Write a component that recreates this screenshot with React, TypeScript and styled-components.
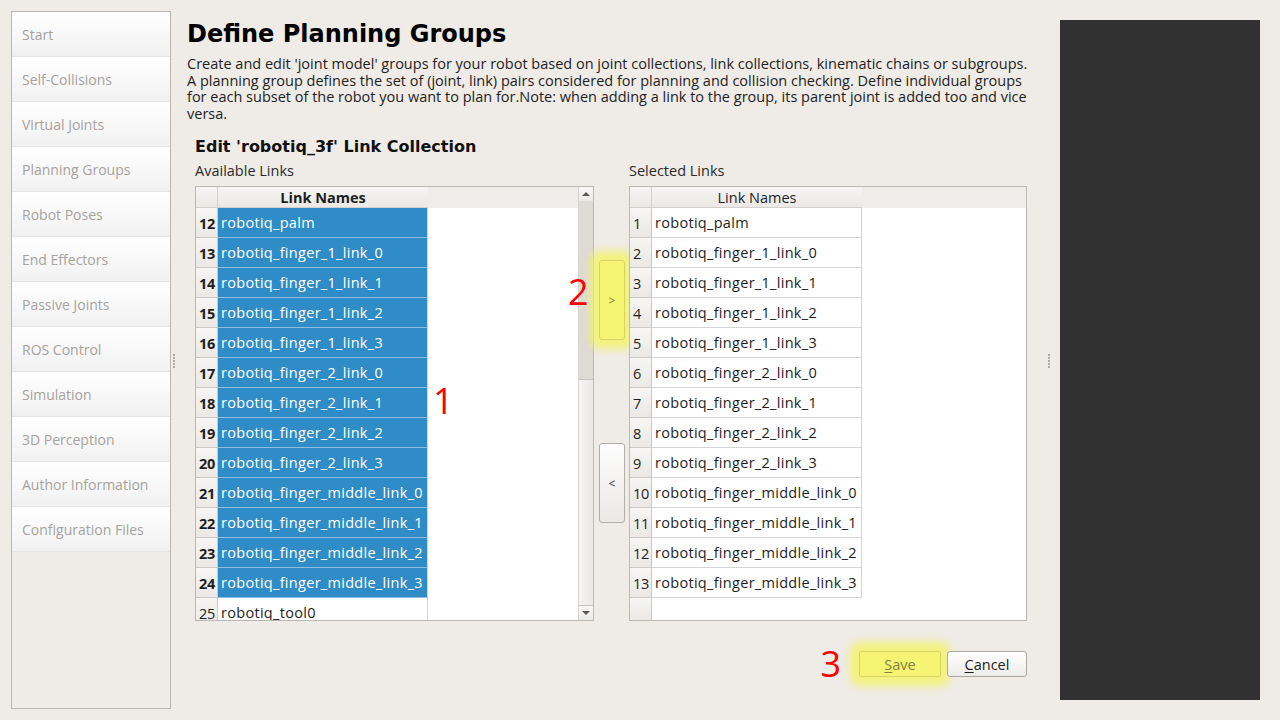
import React from 'react'
import styled, { createGlobalStyle, css } from 'styled-components'

const UI_FONT = `"Open Sans", "Noto Sans", sans-serif`
const TITLE_FONT = `"DejaVu Sans", "Liberation Sans", sans-serif`
const TEXT_SIZE = '14.5px'

const GlobalStyle = createGlobalStyle`
  html, body {
    margin: 0;
    padding: 0;
  }
  body {
    background: #efebe7;
    font-family: ${UI_FONT};
    color: #2b2b2b;
    overflow: hidden;
  }
  * {
    box-sizing: border-box;
  }
`

const steps = [
  'Start',
  'Self-Collisions',
  'Virtual Joints',
  'Planning Groups',
  'Robot Poses',
  'End Effectors',
  'Passive Joints',
  'ROS Control',
  'Simulation',
  '3D Perception',
  'Author Information',
  'Configuration Files',
]

const linkNames = [
  'robotiq_palm',
  'robotiq_finger_1_link_0',
  'robotiq_finger_1_link_1',
  'robotiq_finger_1_link_2',
  'robotiq_finger_1_link_3',
  'robotiq_finger_2_link_0',
  'robotiq_finger_2_link_1',
  'robotiq_finger_2_link_2',
  'robotiq_finger_2_link_3',
  'robotiq_finger_middle_link_0',
  'robotiq_finger_middle_link_1',
  'robotiq_finger_middle_link_2',
  'robotiq_finger_middle_link_3',
]

const available = [...linkNames, 'robotiq_tool0']

const descriptionLines = [
  "Create and edit 'joint model' groups for your robot based on joint collections, link collections, kinematic chains or subgroups.",
  'A planning group defines the set of (joint, link) pairs considered for planning and collision checking. Define individual groups',
  'for each subset of the robot you want to plan for.Note: when adding a link to the group, its parent joint is added too and vice',
  'versa.',
]

export default function App() {
  return (
    <>
      <GlobalStyle />
      <Screen>
        <Nav>
          {steps.map((s) => (
            <NavItem key={s}>{s}</NavItem>
          ))}
        </Nav>
        <Splitter $offset={2}>
          <Grip>
            {[0, 1, 2, 3, 4].map((i) => (
              <Dot key={i} />
            ))}
          </Grip>
        </Splitter>

        <Content>
          <Title>Define Planning Groups</Title>
          <Description>
            {descriptionLines.map((l) => (
              <Line key={l}>{l}</Line>
            ))}
          </Description>

          <Group>
            <GroupTitle>Edit 'robotiq_3f' Link Collection</GroupTitle>
            <Columns>
              <ListColumn>
                <ListLabel>Available Links</ListLabel>
                <TableFrame $width={399}>
                  <TableMain>
                    <HeaderRow>
                      <Corner />
                      <ColumnHeader $bold>Link Names</ColumnHeader>
                    </HeaderRow>
                    <TableBody>
                      {available.map((name, i) => {
                        const selected = i < 13
                        return (
                          <Row key={name}>
                            <NumCell $bold={selected}>{i + 12}</NumCell>
                            <NameCell $selected={selected}>{name}</NameCell>
                          </Row>
                        )
                      })}
                    </TableBody>
                  </TableMain>
                  <ScrollBar>
                    <ScrollArrow>
                      <TriangleUp />
                    </ScrollArrow>
                    <ScrollTrack>
                      <ScrollHandle />
                    </ScrollTrack>
                    <ScrollArrow>
                      <TriangleDown />
                    </ScrollArrow>
                  </ScrollBar>
                  <Annotation style={{ left: 237, top: 196 }}>1</Annotation>
                </TableFrame>
              </ListColumn>

              <MoveColumn>
                <MoveButton $highlight>&gt;</MoveButton>
                <MoveButton>&lt;</MoveButton>
                <Annotation style={{ left: -26, top: 112 }}>2</Annotation>
              </MoveColumn>

              <ListColumn>
                <ListLabel>Selected Links</ListLabel>
                <TableFrame $width={398}>
                  <TableMain>
                    <HeaderRow>
                      <Corner />
                      <ColumnHeader>Link Names</ColumnHeader>
                    </HeaderRow>
                    <TableBody>
                      {linkNames.map((name, i) => (
                        <Row key={name}>
                          <NumCell>{i + 1}</NumCell>
                          <NameCell>{name}</NameCell>
                        </Row>
                      ))}
                      <FillerRow>
                        <FillerNum />
                      </FillerRow>
                    </TableBody>
                  </TableMain>
                </TableFrame>
              </ListColumn>
            </Columns>

            <ActionRow>
              <StepMark>3</StepMark>
              <DialogButton $highlight $width={82}>
                <u>S</u>ave
              </DialogButton>
              <DialogButton $width={80}>
                <u>C</u>ancel
              </DialogButton>
            </ActionRow>
          </Group>
        </Content>

        <Splitter $offset={11}>
          <Grip>
            {[0, 1, 2, 3, 4].map((i) => (
              <Dot key={i} />
            ))}
          </Grip>
        </Splitter>
        <Preview />
      </Screen>
    </>
  )
}

const Screen = styled.div`
  width: 1280px;
  height: 720px;
  display: flex;
  background: #efebe7;
`

const Nav = styled.nav`
  flex: none;
  width: 160px;
  margin: 11px 0 11px 11px;
  border: 1px solid #bab6b2;
  display: flex;
  flex-direction: column;
`

const NavItem = styled.div`
  flex: none;
  height: 45px;
  padding-left: 10px;
  display: flex;
  align-items: center;
  background: linear-gradient(#ffffff, #f1f1f1);
  border-bottom: 1px solid #e7e5e3;
  color: #a6a29e;
  font-size: 14px;
`

const Splitter = styled.div<{ $offset: number }>`
  flex: none;
  width: ${(p) => (p.$offset > 5 ? 23 : 16)}px;
  padding-left: ${(p) => p.$offset}px;
  display: flex;
  align-items: center;
`

const Grip = styled.div`
  display: flex;
  flex-direction: column;
  gap: 1px;
  margin-top: 1px;
`

const Dot = styled.span`
  width: 2px;
  height: 2px;
  background: #aeaaa6;
`

const Content = styled.main`
  flex: 1;
  min-width: 0;
  padding-top: 20px;
  display: flex;
  flex-direction: column;
`

const Title = styled.h1`
  margin: 0;
  font-family: ${TITLE_FONT};
  font-weight: bold;
  font-size: 24px;
  line-height: 28px;
  color: #000;
`

const Description = styled.div`
  margin-top: 8px;
  font-size: ${TEXT_SIZE};
  line-height: 16.6px;
  color: #1e1e1e;
`

const Line = styled.div`
  white-space: nowrap;
`

const Group = styled.section`
  margin-left: 8px;
  margin-top: 15px;
  width: 832px;
  display: flex;
  flex-direction: column;
`

const GroupTitle = styled.h2`
  margin: 0;
  font-family: ${TITLE_FONT};
  font-weight: bold;
  font-size: 16px;
  line-height: 20px;
  color: #111;
`

const Columns = styled.div`
  display: flex;
  margin-top: 5px;
`

const ListColumn = styled.div`
  display: flex;
  flex-direction: column;
`

const ListLabel = styled.div`
  font-size: ${TEXT_SIZE};
  line-height: 18px;
  color: #2b2b2b;
  margin-bottom: 6px;
`

const TableFrame = styled.div<{ $width: number }>`
  position: relative;
  width: ${(p) => p.$width}px;
  height: 435px;
  border: 1px solid #bcb8b4;
  background: #ffffff;
  display: flex;
  overflow: hidden;
`

const TableMain = styled.div`
  flex: 1;
  display: flex;
  flex-direction: column;
  min-width: 0;
`

const HeaderRow = styled.div`
  flex: none;
  height: 21px;
  display: flex;
  background: #efedea;
`

const headerFace = css`
  background: linear-gradient(#f6f5f3, #ebe8e5);
  border-bottom: 1px solid #d3cfcb;
`

const Corner = styled.div`
  ${headerFace};
  width: 22px;
  border-right: 1px solid #d3cfcb;
`

const ColumnHeader = styled.div<{ $bold?: boolean }>`
  ${headerFace};
  width: 210px;
  display: flex;
  align-items: center;
  justify-content: center;
  font-size: ${TEXT_SIZE};
  font-weight: ${(p) => (p.$bold ? 700 : 400)};
  color: #1e1e1e;
`

const TableBody = styled.div`
  flex: 1;
  display: flex;
  flex-direction: column;
  overflow: hidden;
`

const Row = styled.div`
  flex: none;
  height: 30px;
  display: flex;
`

const NumCell = styled.div<{ $bold?: boolean }>`
  width: 22px;
  padding: 2px 0 0 3px;
  display: flex;
  align-items: center;
  background: linear-gradient(#f7f6f4, #ebe8e5);
  border-right: 1px solid #cbc7c3;
  border-bottom: 1px solid #cbc7c3;
  font-size: ${TEXT_SIZE};
  font-weight: ${(p) => (p.$bold ? 700 : 400)};
  color: #1e1e1e;
  letter-spacing: -0.4px;
  white-space: nowrap;
`

const NameCell = styled.div<{ $selected?: boolean }>`
  width: 210px;
  padding-left: 3px;
  display: flex;
  align-items: center;
  border-right: 1px solid #d4d4d4;
  border-bottom: 1px solid ${(p) => (p.$selected ? '#8fbde0' : '#d4d4d4')};
  background: ${(p) => (p.$selected ? '#308cc6' : '#ffffff')};
  color: ${(p) => (p.$selected ? '#ffffff' : '#1e1e1e')};
  font-size: ${TEXT_SIZE};
  letter-spacing: 0.3px;
  white-space: nowrap;
`

const FillerRow = styled.div`
  flex: 1;
  display: flex;
`

const FillerNum = styled.div`
  width: 22px;
  background: linear-gradient(#f7f6f4, #ebe8e5);
  border-right: 1px solid #cbc7c3;
`

const ScrollBar = styled.div`
  flex: none;
  width: 15px;
  display: flex;
  flex-direction: column;
  background: #efedea;
  border-left: 1px solid #d8d4d0;
`

const ScrollArrow = styled.div`
  flex: none;
  height: 14px;
  display: flex;
  align-items: center;
  justify-content: center;
  background: linear-gradient(#f9f8f7, #eceae7);
`

const TriangleUp = styled.span`
  width: 0;
  height: 0;
  border-left: 4px solid transparent;
  border-right: 4px solid transparent;
  border-bottom: 4px solid #5a5856;
`

const TriangleDown = styled.span`
  width: 0;
  height: 0;
  border-left: 4px solid transparent;
  border-right: 4px solid transparent;
  border-top: 4px solid #5a5856;
`

const ScrollTrack = styled.div`
  flex: 1;
  display: flex;
  flex-direction: column;
  justify-content: flex-end;
  background: #dedad6;
`

const ScrollHandle = styled.div`
  height: 227px;
  background: linear-gradient(90deg, #f6f5f3, #ebe8e5);
  border-top: 1px solid #c6c2be;
  border-bottom: 1px solid #c6c2be;
`

const MoveColumn = styled.div`
  position: relative;
  width: 37px;
  padding: 98px 0 0 5px;
  display: flex;
  flex-direction: column;
  gap: 103px;
`

const highlightFace = css`
  background: #f5f573;
  border-color: #d3d36a;
  color: #84823c;
  box-shadow: 0 0 9px 9px rgba(244, 244, 96, 0.8);
`

const MoveButton = styled.button<{ $highlight?: boolean }>`
  width: 26px;
  height: 80px;
  padding: 0;
  border: 1px solid #b3afab;
  border-radius: 3px;
  background: linear-gradient(#fdfdfd, #ebe9e6);
  color: #2b2b2b;
  font-family: ${UI_FONT};
  font-size: 12px;
  ${(p) => p.$highlight && highlightFace};
`

const Annotation = styled.span`
  position: absolute;
  font-family: ${UI_FONT};
  font-size: 36px;
  line-height: 36px;
  color: #ff0000;
`

const ActionRow = styled.div`
  margin-top: 30px;
  display: flex;
  justify-content: flex-end;
  align-items: center;
  gap: 6px;
`

const StepMark = styled.span`
  font-family: ${UI_FONT};
  font-size: 36px;
  line-height: 26px;
  color: #ff0000;
  margin-right: 12px;
`

const DialogButton = styled.button<{ $highlight?: boolean; $width: number }>`
  width: ${(p) => p.$width}px;
  height: 26px;
  padding: 0;
  border: 1px solid #aaa6a2;
  border-radius: 3px;
  background: linear-gradient(#ffffff, #eeece9);
  color: #1e1e1e;
  font-family: ${UI_FONT};
  font-size: ${TEXT_SIZE};
  ${(p) => p.$highlight && highlightFace};

  u {
    text-decoration-thickness: 1px;
    text-underline-offset: 2px;
  }
`

const Preview = styled.div`
  flex: none;
  width: 200px;
  margin: 20px 20px 20px 0;
  background: #313131;
`
